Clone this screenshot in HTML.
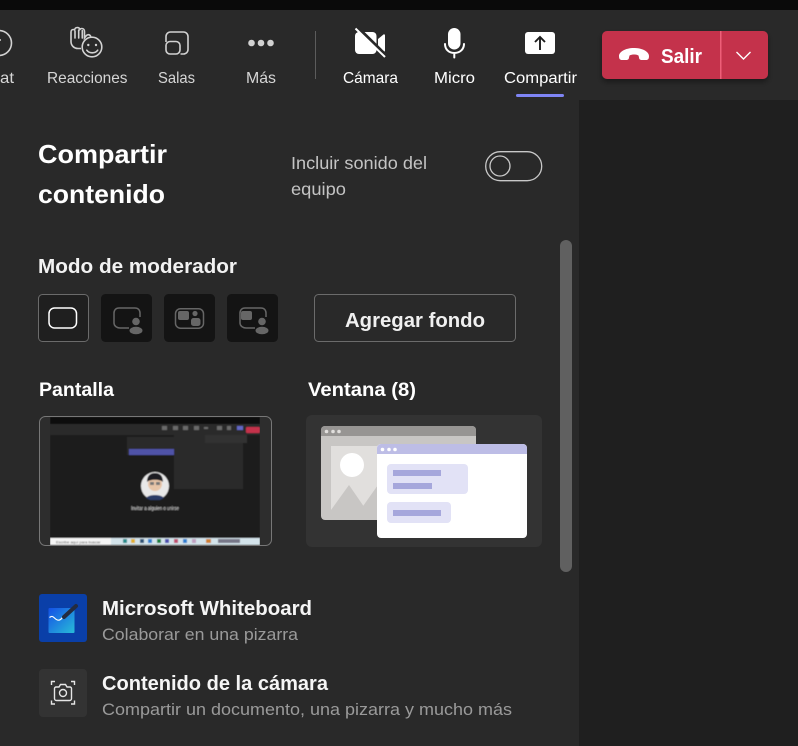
<!DOCTYPE html>
<html><head><meta charset="utf-8">
<style>
html,body{margin:0;padding:0;background:#1f1f1f;width:798px;height:746px;overflow:hidden}
svg{display:block}
text{font-family:"Liberation Sans",sans-serif;white-space:pre}
</style></head>
<body>
<svg width="798" height="746" viewBox="0 0 798 746" xmlns="http://www.w3.org/2000/svg">
<defs>
<linearGradient id="wb" x1="0" y1="0" x2="1" y2="1"><stop offset="0" stop-color="#1450e6"/><stop offset="1" stop-color="#28bcd8"/></linearGradient>
<filter id="sh" x="-10%" y="-20%" width="120%" height="150%"><feDropShadow dx="0" dy="3" stdDeviation="3" flood-color="#000" flood-opacity=".4"/></filter>
<filter id="bl" x="0" y="0" width="100%" height="100%"><feGaussianBlur stdDeviation="0.6"/></filter>
<clipPath id="shot"><rect x="39" y="416" width="233" height="130" rx="6"/></clipPath>
</defs>
<rect width="798" height="746" fill="#1f1f1f"/>
<rect width="798" height="10" fill="#0a0a0a"/>
<rect y="10" width="798" height="90" fill="#292929"/>
<rect y="100" width="579" height="646" fill="#292929"/>

<!-- toolbar icons -->
<g fill="none" stroke="#d2d2d2" stroke-width="1.600">
<circle cx="-1" cy="43" r="12.500"/>
<path d="M-2 40h3"/>
<!-- hand -->
<path d="M81 48.500h-3c-4 0-7-3-7-7V32c0-1.500 1-2.500 2.300-2.500.5 0 1 .1 1.300.4.300-1.500 1.300-2.400 2.700-2.400 1.200 0 2.300.6 2.700 1.800.5-.5 1-.8 1.800-.8 1.500 0 2.700 1 2.700 3v6.500l1.500-2c1-1.300 2.600-1.700 3.800-.8 1.200.9 1.200 2.300.2 3.600l-2 2.700"/>
<path d="M75 31v7M78.700 30v8M82.300 30.500V38" stroke-linecap="round"/>
<circle cx="92" cy="47" r="9.800" fill="#292929"/>
<path d="M86.800 50.200c2.500 3.500 8.400 3.500 10.900 0" stroke-linecap="round"/>
<!-- rooms -->
<rect x="166" y="41.500" width="14" height="12.500" rx="4"/>
<path d="M166 42v-5.500c0-2.500 2-4.500 4.500-4.500h13c2.500 0 4.500 2 4.500 4.500v13c0 2.500-2 4.500-4.500 4.500h-3"/>
</g>
<g fill="#d2d2d2"><circle cx="88.300" cy="45" r="1.200"/><circle cx="96" cy="45" r="1.200"/>
<circle cx="251.500" cy="43" r="3.300"/><circle cx="261" cy="43" r="3.300"/><circle cx="270.500" cy="43" r="3.300"/></g>
<rect x="315" y="31" width="1" height="48" fill="#5c5c5c"/>
<!-- camera off -->
<rect x="355" y="32" width="21.500" height="22" rx="4" fill="#fff"/>
<path d="M378 39l5.500-4.500c.7-.5 1.500 0 1.500 1v15c0 1-.8 1.500-1.500 1L378 47z" fill="#fff"/>
<path d="M358.300 28l28 27.500" stroke="#292929" stroke-width="3" fill="none"/>
<path d="M355.500 28.500l29.500 28.500" stroke="#fff" stroke-width="2" fill="none"/>
<!-- mic -->
<rect x="448" y="28" width="12.500" height="21.500" rx="6.250" fill="#fff"/>
<path d="M445 44c0 5.500 4 9 9.300 9s9.700-3.500 9.700-9M454.300 53v4.500" fill="none" stroke="#fff" stroke-width="2" stroke-linecap="round"/>
<!-- share -->
<rect x="525" y="32" width="30" height="22" rx="3" fill="#fff"/>
<path d="M540 50V37.500M535 42l5-5 5 5" fill="none" stroke="#1c1c1c" stroke-width="1.900"/>
<rect x="516" y="94" width="48" height="3" rx="1.500" fill="#7f85f5"/>

<!-- toolbar labels -->
<g font-size="16" fill="#d6d6d6">
<text x="0" y="83" textLength="14" lengthAdjust="spacingAndGlyphs">at</text>
<text x="47" y="83" textLength="80.500" lengthAdjust="spacingAndGlyphs">Reacciones</text>
<text x="158" y="83" textLength="37" lengthAdjust="spacingAndGlyphs">Salas</text>
<text x="246" y="83" textLength="30" lengthAdjust="spacingAndGlyphs">Más</text>
</g>
<g font-size="16" fill="#fff">
<text x="343" y="83" textLength="55" lengthAdjust="spacingAndGlyphs">Cámara</text>
<text x="434" y="83" textLength="41" lengthAdjust="spacingAndGlyphs">Micro</text>
<text x="504" y="83" textLength="73" lengthAdjust="spacingAndGlyphs">Compartir</text>
</g>

<!-- leave -->
<rect x="602" y="31" width="166" height="48" rx="5" fill="#c4314b" filter="url(#sh)"/>
<rect x="720" y="31" width="1.500" height="48" fill="#ee5f78"/>
<path d="M619 56c0-4 6-8 15-8s15 4 15 8c0 3-1 4-3 4h-4c-2 0-3-1-3-2.500l-.5-2c-1.500-.8-3-1-4.500-1s-3 .2-4.500 1l-.5 2c0 1.500-1 2.500-3 2.500h-4c-2 0-3-1-3-4z" fill="#fff"/>
<text x="661" y="63" font-size="20" font-weight="700" fill="#fff" textLength="41" lengthAdjust="spacingAndGlyphs">Salir</text>
<path d="M736.500 52l7 7 7-7" fill="none" stroke="#fff" stroke-width="1.400"/>

<!-- heading -->
<g font-weight="700" fill="#fff">
<text x="38" y="163" font-size="26" textLength="129" lengthAdjust="spacingAndGlyphs">Compartir</text>
<text x="38" y="203" font-size="26" textLength="127" lengthAdjust="spacingAndGlyphs">contenido</text>
</g>
<text x="291" y="169" font-size="17.500" fill="#c4c4c4" textLength="136" lengthAdjust="spacingAndGlyphs">Incluir sonido del</text>
<text x="291" y="195" font-size="17.500" fill="#c4c4c4" textLength="55" lengthAdjust="spacingAndGlyphs">equipo</text>
<rect x="485.700" y="151.700" width="56" height="29" rx="14.500" fill="none" stroke="#c8c8c8" stroke-width="1.300"/>
<circle cx="500" cy="166" r="10" fill="none" stroke="#c8c8c8" stroke-width="1.300"/>

<!-- presenter modes -->
<text x="38" y="273" font-size="20" font-weight="700" fill="#f2f2f2" textLength="199" lengthAdjust="spacingAndGlyphs">Modo de moderador</text>
<rect x="38.500" y="294.500" width="50" height="47" rx="4" fill="#1f1f1f" stroke="#6b6b6b"/>
<rect x="49" y="308" width="27.500" height="20" rx="5.500" fill="none" stroke="#fff" stroke-width="1.500"/>
<g fill="#141414">
<rect x="101" y="294" width="51" height="48" rx="4.500"/>
<rect x="164" y="294" width="51" height="48" rx="4.500"/>
<rect x="227" y="294" width="51" height="48" rx="4.500"/>
</g>
<g fill="none" stroke="#666" stroke-width="1.500">
<path d="M129 328h-9c-3 0-6-2-6-5v-10c0-3 2-5 5-5h16c3 0 5 2 5 5v4"/>
<rect x="175.500" y="308.700" width="28" height="19.500" rx="5"/>
<path d="M255 328h-9c-3 0-6-2-6-5v-10c0-3 2-5 5-5h16c3 0 5 2 5 5v4"/>
</g>
<g fill="#666">
<circle cx="136" cy="321.500" r="3.800"/><ellipse cx="136" cy="330.500" rx="6.500" ry="3.800"/>
<rect x="178" y="311" width="11" height="9" rx="2"/><circle cx="195" cy="313.500" r="2.600"/><rect x="191" y="318" width="9.500" height="8" rx="2.500"/>
<rect x="241" y="311" width="11" height="9" rx="2"/>
<circle cx="262" cy="321.500" r="3.800"/><ellipse cx="262" cy="330.500" rx="6.500" ry="3.800"/>
</g>
<rect x="314.500" y="294.500" width="201" height="47" rx="4" fill="#292929" stroke="#6b6b6b"/>
<text x="345" y="327" font-size="20" font-weight="700" fill="#f0f0f0" textLength="140" lengthAdjust="spacingAndGlyphs">Agregar fondo</text>

<!-- Screen / window -->
<text x="39" y="396" font-size="19" font-weight="700" fill="#fff" textLength="75" lengthAdjust="spacingAndGlyphs">Pantalla</text>
<text x="308" y="396" font-size="19" font-weight="700" fill="#fff" textLength="108" lengthAdjust="spacingAndGlyphs">Ventana (8)</text>

<g clip-path="url(#shot)">
<rect x="39" y="416" width="233" height="130" fill="#2d2d2d"/>
<g filter="url(#bl)">
<rect x="50" y="417" width="210" height="127" fill="#1f1f1f"/>
<rect x="50" y="417" width="210" height="7" fill="#0a0a0a"/>
<rect x="50" y="424" width="210" height="11" fill="#292929"/>
<rect x="174" y="435" width="69" height="54" fill="#2a2a2a"/>
<rect x="127" y="437" width="47" height="18" fill="#2c2c2c"/>
<rect x="129" y="449" width="45" height="6" fill="#4f53a8"/>
<rect x="205" y="435" width="42" height="8" fill="#333"/>
<rect x="246" y="427" width="14" height="6" rx="1" fill="#c4314b"/>
<g fill="#6a6a6a"><rect x="162" y="426" width="5" height="4"/><rect x="173" y="426" width="5" height="4"/><rect x="183" y="426" width="5" height="4"/><rect x="194" y="426" width="5" height="4"/><rect x="204" y="427" width="4" height="2"/><rect x="217" y="426" width="5" height="4"/><rect x="227" y="426" width="4" height="4"/></g>
<rect x="237" y="426" width="6" height="4" fill="#6268c4"/>
<circle cx="155" cy="486" r="14" fill="#e8e8e8"/>
<circle cx="155" cy="484" r="7" fill="#e7c5a8"/>
<path d="M147 482c0-7 4-9 8-9s8 2 8 9c-3-3-13-3-16 0z" fill="#1c1c24"/>
<path d="M146 498c3-4 15-4 18 0l-4 2h-10z" fill="#2b3a66"/>
<rect x="150" y="482" width="4" height="3" fill="#777"/><rect x="156" y="482" width="4" height="3" fill="#777"/>
<text x="131" y="510" font-size="5.500" fill="#ddd" textLength="48" lengthAdjust="spacingAndGlyphs">Invitar a alguien o unirse</text>
<rect x="50" y="538" width="210" height="7" fill="#d3e3ea"/>
<rect x="50" y="538" width="61" height="7" fill="#f5f5f5"/>
<text x="56" y="543.500" font-size="4" fill="#555">Escribe aquí para buscar</text>
<rect x="123" y="539" width="4" height="4" fill="#2a8c8c"/><rect x="131" y="539" width="4" height="4" fill="#e0b030"/><rect x="140" y="539" width="4" height="4" fill="#335577"/><rect x="148" y="539" width="4" height="4" fill="#2f7fd0"/><rect x="157" y="539" width="4" height="4" fill="#1f8040"/><rect x="165" y="539" width="4" height="4" fill="#5050b0"/><rect x="174" y="539" width="4" height="4" fill="#c05070"/><rect x="183" y="539" width="4" height="4" fill="#2f7fd0"/><rect x="192" y="539" width="4" height="4" fill="#c0a0c0"/><rect x="206" y="539" width="5" height="4" fill="#d08030"/><rect x="218" y="539" width="22" height="4" fill="#778"/>
</g>
</g>
<rect x="39.500" y="416.500" width="232" height="129" rx="6" fill="none" stroke="#777"/>

<rect x="306" y="415" width="236" height="132" rx="6" fill="#333"/>
<rect x="321" y="426" width="155" height="94" rx="4" fill="#c8c6c4"/>
<path d="M321 436v-6c0-2 2-4 4-4h147c2 0 4 2 4 4v6z" fill="#979593"/>
<g fill="#e1dfdd"><circle cx="326.500" cy="431.500" r="1.800"/><circle cx="333" cy="431.500" r="1.800"/><circle cx="339" cy="431.500" r="1.800"/></g>
<polygon points="331,446 387,446 387,480 376.700,486.700 363.300,505.700 349,485 331,510" fill="#e1dfdd"/>
<circle cx="352" cy="465" r="12" fill="#fff"/>
<rect x="377" y="444" width="150" height="94" rx="4" fill="#fff"/>
<path d="M377 454v-6c0-2 2-4 4-4h142c2 0 4 2 4 4v6z" fill="#bdbde6"/>
<g fill="#fff"><circle cx="382.500" cy="449.500" r="1.800"/><circle cx="389" cy="449.500" r="1.800"/><circle cx="395" cy="449.500" r="1.800"/></g>
<rect x="387" y="464" width="81" height="30" rx="4" fill="#e2e2f6"/>
<rect x="393" y="470" width="48" height="6" fill="#a6a7dc"/>
<rect x="393" y="483" width="39" height="6" fill="#a6a7dc"/>
<rect x="387" y="502" width="64" height="21" rx="4" fill="#e2e2f6"/>
<rect x="393" y="510" width="48" height="6" fill="#a6a7dc"/>

<!-- scrollbar -->
<rect x="560" y="240" width="12" height="332" rx="6" fill="#606060"/>

<!-- list -->
<rect x="39" y="594" width="48" height="48" rx="3" fill="#0a3fa8"/>
<rect x="48.500" y="608" width="26" height="25" rx="1" fill="url(#wb)"/>
<path d="M49.500 617.500c2-1.500 3-1.500 5 .5s4 3 6 1.500 2-2.500 3-3" fill="none" stroke="#fff" stroke-width="1.200"/>
<path d="M64 617l12-11" stroke="#242c40" stroke-width="4" stroke-linecap="round" fill="none"/>
<text x="102" y="615" font-size="20" font-weight="700" fill="#f5f5f5" textLength="210" lengthAdjust="spacingAndGlyphs">Microsoft Whiteboard</text>
<text x="102" y="640" font-size="16.500" fill="#9a9a9a" textLength="196" lengthAdjust="spacingAndGlyphs">Colaborar en una pizarra</text>

<rect x="39" y="669" width="48" height="48" rx="4" fill="#333"/>
<g fill="none" stroke="#e6e6e6" stroke-width="1.400">
<path d="M51.500 685v-3.500h3.500M71 681.500h3.500v3.500M51.500 700.500v3.500h3.500M71 704h3.500v-3.500"/>
<path d="M54.500 688.500c0-1 .8-1.500 1.500-1.500h3l1.500-2.500h5l1.500 2.500h3c.7 0 1.500.5 1.500 1.500v10c0 1-.8 2-2 2h-13c-1.200 0-2-1-2-2z"/>
<circle cx="63" cy="693" r="3.500"/>
</g>
<text x="102" y="690" font-size="20" font-weight="700" fill="#f5f5f5" textLength="226" lengthAdjust="spacingAndGlyphs">Contenido de la cámara</text>
<text x="102" y="715" font-size="16.500" fill="#9a9a9a" textLength="410" lengthAdjust="spacingAndGlyphs">Compartir un documento, una pizarra y mucho más</text>
</svg>
</body></html>
